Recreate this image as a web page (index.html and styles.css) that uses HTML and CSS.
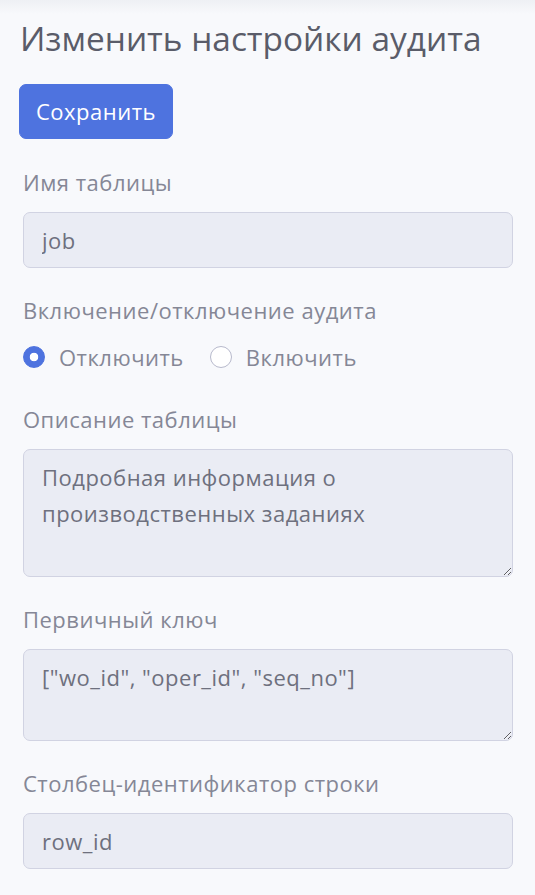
FILE: index.html
```html
<!DOCTYPE html>
<html lang="ru">
<head>
<meta charset="utf-8">
<title>Изменить настройки аудита</title>
<link rel="stylesheet" href="styles.css">
</head>
<body>
<div class="page">
  <h3 class="title">Изменить настройки аудита</h3>
  <button class="btn-primary" type="button">Сохранить</button>
  <form class="form">
    <div class="group">
      <label class="label" for="tname">Имя таблицы</label>
      <input class="control" id="tname" type="text" value="job" readonly>
    </div>
    <div class="group group-radio">
      <div class="label">Включение/отключение аудита</div>
      <div class="radios">
        <label class="radio"><input type="radio" name="audit" checked><span>Отключить</span></label>
        <label class="radio"><input type="radio" name="audit"><span>Включить</span></label>
      </div>
    </div>
    <div class="group">
      <label class="label" for="tdesc">Описание таблицы</label>
      <textarea class="control area" id="tdesc" rows="3" readonly>Подробная информация о производственных заданиях</textarea>
    </div>
    <div class="group">
      <label class="label" for="tpk">Первичный ключ</label>
      <textarea class="control area" id="tpk" rows="2" readonly>["wo_id", "oper_id", "seq_no"]</textarea>
    </div>
    <div class="group">
      <label class="label" for="trow">Столбец-идентификатор строки</label>
      <input class="control" id="trow" type="text" value="row_id" readonly>
    </div>
  </form>
</div>
</body>
</html>
```
FILE: styles.css
```css
html, body {
  margin: 0;
  padding: 0;
}
body {
  background: linear-gradient(#eef0f4 0px, #f8f9fc 14px) #f8f9fc;
  font-family: "Open Sans", "Noto Sans", sans-serif;
  color: #858796;
  font-size: 22px;
  letter-spacing: 0.5px;
  min-height: 895px;
}
.page {
  padding: 17px 22px 0 23px;
}
.title {
  margin: 0 0 0 -3px;
  font-size: 33.4px;
  font-weight: 400;
  letter-spacing: 0;
  line-height: 42px;
  color: #5a5c69;
  height: 42px;
}
.btn-primary {
  display: block;
  margin: 25px 0 0 -4px;
  height: 55px;
  width: 154px;
  padding: 0;
  border: 1px solid #4e73df;
  border-radius: 7px;
  background: #4e73df;
  color: #fff;
  font-family: inherit;
  font-size: 22px;
  letter-spacing: 0.5px;
  line-height: 53px;
  text-align: center;
}
.form {
  margin-top: 28px;
}
.group {
  margin-bottom: 27px;
}
.group-radio {
  margin-bottom: 32px;
}
.label {
  display: block;
  line-height: 30px;
  margin-bottom: 15px;
}
.control {
  display: block;
  box-sizing: border-box;
  width: 100%;
  margin: 0;
  padding: 9px 18px;
  border: 1px solid #d1d3e2;
  border-radius: 7px;
  background: #eaecf4;
  color: #6e707e;
  font-family: inherit;
  font-size: 22px;
  letter-spacing: 0.5px;
  line-height: 36px;
  outline: none;
}
.area {
  resize: vertical;
}
.radios {
  display: flex;
  gap: 26px;
  height: 30px;
  padding-top: 2px;
  align-items: center;
}
.radio {
  display: flex;
  align-items: center;
  gap: 14px;
  line-height: 30px;
}
.radio input {
  appearance: none;
  -webkit-appearance: none;
  margin: 0;
  width: 22px;
  height: 22px;
  border-radius: 50%;
  border: 1px solid #b7b9cc;
  background: #fff;
  box-sizing: border-box;
}
.radio input:checked {
  border-color: #4e73df;
  background: radial-gradient(circle, #fff 0 4px, #4e73df 4.6px);
}
```
